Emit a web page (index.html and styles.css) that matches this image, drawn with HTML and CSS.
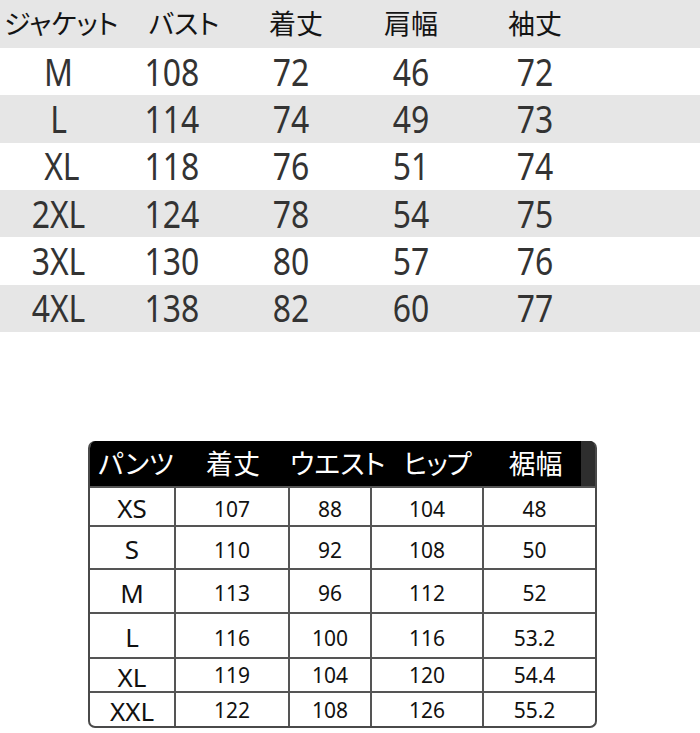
FILE: index.html
```html
<!DOCTYPE html>
<html lang="ja">
<head>
<meta charset="utf-8">
<link rel="stylesheet" href="styles.css">
</head>
<body>
<div class="jacket">
  <div class="row head">
    <div class="c h1">ジャケット</div>
    <div class="c h2">バスト</div>
    <div class="c h3">着丈</div>
    <div class="c">肩幅</div>
    <div class="c">袖丈</div>
  </div>
  <div class="row white"><div class="c n">M</div><div class="c n">108</div><div class="c n">72</div><div class="c n">46</div><div class="c n">72</div></div>
  <div class="row gray"><div class="c n">L</div><div class="c n">114</div><div class="c n">74</div><div class="c n">49</div><div class="c n">73</div></div>
  <div class="row white"><div class="c n s1">XL</div><div class="c n">118</div><div class="c n">76</div><div class="c n">51</div><div class="c n">74</div></div>
  <div class="row gray"><div class="c n">2XL</div><div class="c n">124</div><div class="c n">78</div><div class="c n">54</div><div class="c n">75</div></div>
  <div class="row white"><div class="c n">3XL</div><div class="c n">130</div><div class="c n">80</div><div class="c n">57</div><div class="c n">76</div></div>
  <div class="row gray"><div class="c n">4XL</div><div class="c n">138</div><div class="c n">82</div><div class="c n">60</div><div class="c n">77</div></div>
</div>

<div class="pants">
  <div class="phead">
    <div class="pc">パンツ</div>
    <div class="pc">着丈</div>
    <div class="pc waist">ウエスト</div>
    <div class="pc hip">ヒップ</div>
    <div class="pc last">裾幅</div>
  </div>
  <div class="prow r1"><div class="pc sz">XS</div><div class="pc">107</div><div class="pc">88</div><div class="pc">104</div><div class="pc last">48</div></div>
  <div class="prow r2"><div class="pc sz">S</div><div class="pc">110</div><div class="pc">92</div><div class="pc">108</div><div class="pc last">50</div></div>
  <div class="prow r3"><div class="pc sz">M</div><div class="pc">113</div><div class="pc">96</div><div class="pc">112</div><div class="pc last">52</div></div>
  <div class="prow r4"><div class="pc sz">L</div><div class="pc">116</div><div class="pc">100</div><div class="pc">116</div><div class="pc last">53.2</div></div>
  <div class="prow r5"><div class="pc sz">XL</div><div class="pc">119</div><div class="pc">104</div><div class="pc">120</div><div class="pc last">54.4</div></div>
  <div class="prow r6"><div class="pc sz">XXL</div><div class="pc">122</div><div class="pc">108</div><div class="pc">126</div><div class="pc last">55.2</div></div>
</div>
</body>
</html>
```

FILE: styles.css
```css
html, body {
  margin: 0;
  padding: 0;
  background: #ffffff;
}

body {
  width: 700px;
  height: 733px;
  overflow: hidden;
  font-family: "Noto Sans", "Noto Sans CJK JP", sans-serif;
}

.jacket {
  display: flex;
  flex-direction: column;
}

.row {
  display: grid;
  grid-template-columns: 117px 110px 128px 112px 136px 1fr;
  height: 47.33px;
  align-items: center;
}

.row.head {
  height: 48px;
  background: #e6e6e6;
  font-family: "Noto Sans CJK JP", sans-serif;
  font-size: 27px;
  color: #141414;
  font-feature-settings: "palt";
}

.row.gray {
  background: #e6e6e6;
}

.row.white {
  background: #ffffff;
}

.c {
  text-align: center;
  line-height: 1;
  white-space: nowrap;
}

.head .c {
  padding-bottom: 3px;
}

.head .h1 {
  padding-left: 4px;
}

.head .h2 {
  padding-left: 24px;
}

.head .h3 {
  padding-left: 10px;
}

.n {
  font-family: "Noto Sans", sans-serif;
  font-size: 38px;
  color: #333333;
  transform: scaleX(0.84);
  padding-bottom: 2px;
}

.n.s1 {
  padding-left: 8px;
}

.pants {
  margin: 109px 0 0 88px;
  width: 509px;
  box-sizing: border-box;
  border: 2px solid #4a4a4a;
  border-top: none;
  border-radius: 7px;
  overflow: hidden;
  background: #ffffff;
}

.phead {
  display: grid;
  grid-template-columns: 86px 114px 82px 112px 1fr;
  height: 45px;
  align-items: center;
  background: #000000;
  border-right: 16px solid #2e2e2e;
  margin-right: -2px;
  color: #ffffff;
  font-family: "Noto Sans CJK JP", sans-serif;
  font-size: 27px;
  font-feature-settings: "palt";
}

.phead .pc {
  text-align: center;
  line-height: 1;
  white-space: nowrap;
  padding-bottom: 2px;
}

.phead .pc:first-child {
  padding-left: 6px;
}

.phead .pc.waist {
  padding-right: 6px;
}

.phead .pc.hip {
  padding-left: 18px;
  letter-spacing: -1px;
}

.phead .pc.last {
  padding-left: 6px;
}

.prow {
  display: grid;
  grid-template-columns: 86px 114px 82px 112px 1fr;
  border-top: 2px solid #555555;
  font-family: "Noto Sans", sans-serif;
  font-size: 21px;
  color: #111111;
}

.prow .pc {
  display: flex;
  align-items: center;
  justify-content: center;
  border-right: 2px solid #555555;
  padding-top: 6px;
  line-height: 1;
  white-space: nowrap;
}

.prow .pc.last {
  border-right: none;
  padding-right: 10px;
}

.prow .pc.sz {
  font-size: 26px;
  padding-top: 4px;
}

.r1 { height: 37px; }
.r2 { height: 41px; }
.r3 { height: 42px; }
.r4 { height: 43px; }
.r5 { height: 32px; }
.r6 { height: 33px; }

.r5 .pc, .r6 .pc { padding-top: 2px; }
```
